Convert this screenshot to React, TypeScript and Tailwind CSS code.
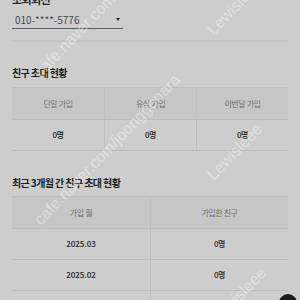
import React from "react";

const font = { fontFamily: '"Noto Sans CJK KR", Roboto, sans-serif' };

function Watermarks() {
  return (
    <div className="pointer-events-none absolute inset-0 font-['Liberation_Sans',sans-serif] text-[16px] leading-[16px] text-white/40">
      <span className="absolute left-[43px] top-[-84px] origin-bottom-left -rotate-[46deg] whitespace-nowrap">cafe.naver.com/joonggonara</span>
      <span className="absolute left-[43px] top-[64px] origin-bottom-left -rotate-[46deg] whitespace-nowrap">cafe.naver.com/joonggonara</span>
      <span className="absolute left-[43px] top-[212px] origin-bottom-left -rotate-[46deg] whitespace-nowrap">cafe.naver.com/joonggonara</span>
      <span className="absolute left-[216px] top-[22px] origin-bottom-left -rotate-[46deg] whitespace-nowrap">Lewisleee</span>
      <span className="absolute left-[216px] top-[167px] origin-bottom-left -rotate-[46deg] whitespace-nowrap">Lewisleee</span>
      <span className="absolute left-[220px] top-[311px] origin-bottom-left -rotate-[46deg] whitespace-nowrap">Lewisleee</span>
    </div>
  );
}

export default function App() {
  return (
    <div className="relative h-[300px] w-[300px] overflow-hidden bg-[#cdcdcd]" style={font}>
      <div className="flex flex-col px-3">
        <div className="-mt-[7px] h-[12px] text-[11px] font-bold leading-[12px] tracking-[-0.06em] text-[#2a2a2a]">조회회선</div>
        <div className="mt-[6px] flex h-[18px] w-[111px] items-center justify-between border-b border-[#5c5c5c] pl-[3px] pr-[3px]">
          <span className="text-[10px] leading-[14px] text-[#4a4a4a]">010-****-5776</span>
          <span className="h-0 w-0 border-l-[2.5px] border-r-[2.5px] border-t-[3px] border-l-transparent border-r-transparent border-t-[#222]" />
        </div>
        <div className="mt-[11px] h-[2px] bg-[#c3c3c3]" />

        <div className="mt-[24px] h-[14px] text-[10px] font-bold leading-[14px] tracking-[-0.06em] text-[#1e1e1e]">친구 초대 현황</div>
        <div className="mt-[7px] border-t border-[#bcbcbc]">
          <div className="grid grid-cols-3 border-b border-[#bcbcbc] bg-[#c6c6c6]">
            <div className="flex h-[31px] items-center justify-center text-[8px] tracking-[-0.05em] text-[#707070]">단말 가입</div>
            <div className="flex h-[31px] items-center justify-center border-l border-[#bfbfbf] text-[8px] tracking-[-0.05em] text-[#707070]">유심 가입</div>
            <div className="flex h-[31px] items-center justify-center border-l border-[#bfbfbf] text-[8px] tracking-[-0.05em] text-[#707070]">이번달 가입</div>
          </div>
          <div className="grid grid-cols-3 border-b border-[#bcbcbc]">
            <div className="flex h-[30px] items-center justify-center text-[8px] font-medium tracking-[-0.06em] text-[#222]">0명</div>
            <div className="flex h-[30px] items-center justify-center border-l border-[#bfbfbf] text-[8px] font-medium tracking-[-0.06em] text-[#222]">0명</div>
            <div className="flex h-[30px] items-center justify-center border-l border-[#bfbfbf] text-[8px] font-medium tracking-[-0.06em] text-[#222]">0명</div>
          </div>
        </div>

        <div className="mt-[25px] h-[14px] text-[10px] font-bold leading-[14px] tracking-[-0.06em] text-[#1e1e1e]">최근 3개월 간 친구 초대 현황</div>
        <div className="mt-[6px] border-t border-[#bcbcbc]">
          <div className="grid grid-cols-2 border-b border-[#bcbcbc] bg-[#c6c6c6]">
            <div className="flex h-[31px] items-center justify-center text-[8px] tracking-[-0.05em] text-[#707070]">가입 월</div>
            <div className="flex h-[31px] items-center justify-center border-l border-[#bfbfbf] text-[8px] tracking-[-0.05em] text-[#707070]">가입한 친구</div>
          </div>
          {["2025.03", "2025.02", "2025.01"].map((m) => (
            <div key={m} className="grid grid-cols-2 border-b border-[#bcbcbc]">
              <div className="flex h-[30px] items-center justify-center text-[8px] font-medium text-[#222]">{m}</div>
              <div className="flex h-[30px] items-center justify-center border-l border-[#bfbfbf] text-[8px] font-medium tracking-[-0.06em] text-[#222]">0명</div>
            </div>
          ))}
        </div>
      </div>
      <Watermarks />
      <div className="absolute left-[279px] top-[294px] h-[18px] w-[18px] rounded-full bg-[#1a1a1a]" />
    </div>
  );
}
